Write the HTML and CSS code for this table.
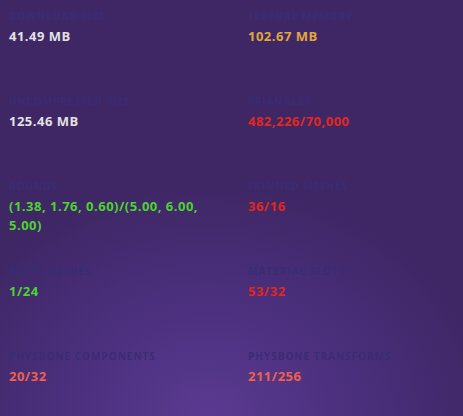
FILE: index.html
```html
<!DOCTYPE html>
<html>
<head>
  <title>Avatar Stats</title>
  <link rel="stylesheet" href="styles.css">
</head>
<body>
  <div class="stats">
    <div class="stat">
      <div class="label">Download Size</div>
      <div class="value white">41.49 MB</div>
    </div>
    <div class="stat">
      <div class="label">Texture Memory</div>
      <div class="value gold">102.67 MB</div>
    </div>
    <div class="stat">
      <div class="label">Uncompressed Size</div>
      <div class="value white">125.46 MB</div>
    </div>
    <div class="stat">
      <div class="label">Triangles</div>
      <div class="value red">482,226/70,000</div>
    </div>
    <div class="stat">
      <div class="label">Bounds</div>
      <div class="value green">(1.38, 1.76, 0.60)/(5.00, 6.00, 5.00)</div>
    </div>
    <div class="stat">
      <div class="label">Skinned Meshes</div>
      <div class="value red">36/16</div>
    </div>
    <div class="stat">
      <div class="label">Basic Meshes</div>
      <div class="value green">1/24</div>
    </div>
    <div class="stat">
      <div class="label">Material Slots</div>
      <div class="value red">53/32</div>
    </div>
    <div class="stat">
      <div class="label">PhysBone Components</div>
      <div class="value coral">20/32</div>
    </div>
    <div class="stat">
      <div class="label">PhysBone Transforms</div>
      <div class="value coral">211/256</div>
    </div>
  </div>
</body>
</html>
```

FILE: styles.css
```css
html, body {
  margin: 0;
  height: 100%;
}

body {
  font-family: "Open Sans", "Noto Sans", sans-serif;
  background: radial-gradient(ellipse 60% 55% at 45% 100%, #5a3a90 0%, #4a2f7c 55%, #3f2766 100%), #3f2766;
  overflow: hidden;
}

.stats {
  display: grid;
  grid-template-columns: 239px 1fr;
  padding: 9px 0 0 9px;
}

.stat {
  height: 85px;
  padding-right: 22px;
  box-sizing: border-box;
}

.label {
  font-size: 10px;
  font-weight: 700;
  letter-spacing: 1px;
  line-height: 14px;
  text-transform: uppercase;
  color: #3a2c74;
}

.value {
  margin-top: 4px;
  font-size: 13px;
  font-weight: 700;
  letter-spacing: 0.5px;
  line-height: 19px;
}

.white { color: #e2e2e2; }
.gold { color: #e0a83c; }
.red { color: #e2271c; }
.green { color: #4cd32e; }
.coral { color: #f0604c; }
```
